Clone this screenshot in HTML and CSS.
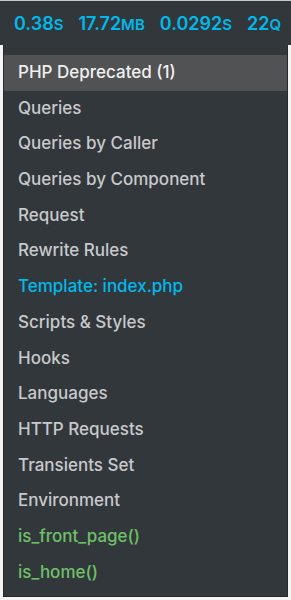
FILE: index.html
```html
<!DOCTYPE html>
<html>
<head>
    <title>Query Monitor</title>
    <link rel="stylesheet" href="styles.css">
</head>
<body>
    <div id="adminbar">
        <span class="stat">0.38<span class="unit">s</span></span>
        <span class="stat">17.72<span class="unit">mb</span></span>
        <span class="stat">0.0292<span class="unit">s</span></span>
        <span class="stat">22<span class="unit">q</span></span>
    </div>

    <ul id="qm-menu">
        <li class="hover">PHP Deprecated (1)</li>
        <li>Queries</li>
        <li>Queries by Caller</li>
        <li>Queries by Component</li>
        <li>Request</li>
        <li>Rewrite Rules</li>
        <li class="blue">Template: index.php</li>
        <li>Scripts &amp; Styles</li>
        <li>Hooks</li>
        <li>Languages</li>
        <li>HTTP Requests</li>
        <li>Transients Set</li>
        <li>Environment</li>
        <li class="green">is_front_page()</li>
        <li class="green">is_home()</li>
    </ul>
</body>
</html>
```

FILE: styles.css
```css
/* Page behind the admin bar */
body {
    font-family: Inter, "Liberation Sans", sans-serif;
    margin: 0;
    padding: 0;
    background-color: #f4f4f4;
    height: 600px;
    overflow: hidden;
}

/* Top admin bar with the stats */
#adminbar {
    height: 45px;
    border-top: 1px solid #c9c9c9;
    background-color: #32373c;
    display: flex;
    align-items: center;
    gap: 15px;
    padding-left: 14px;
    box-sizing: border-box;
}

.stat {
    color: #00b9eb;
    font-size: 18px;
    font-weight: 600;
}

.stat .unit {
    text-transform: uppercase;
    font-size: 15px;
}

/* Dropdown menu */
#qm-menu {
    list-style: none;
    margin: 0 3px;
    padding: 10px 0 6px 0;
    background-color: #32373c;
    border: 1px solid #26292d;
    border-top: none;
}

#qm-menu li {
    height: 35.7px;
    line-height: 35.7px;
    padding-left: 14px;
    color: #c8c9ca;
    font-size: 17px;
    font-weight: 500;
    white-space: nowrap;
}

#qm-menu li.hover {
    background-color: #505254;
    color: #f0f0f0;
}

#qm-menu li.blue {
    color: #00b9eb;
}

#qm-menu li.green {
    color: #6fc066;
}
```
